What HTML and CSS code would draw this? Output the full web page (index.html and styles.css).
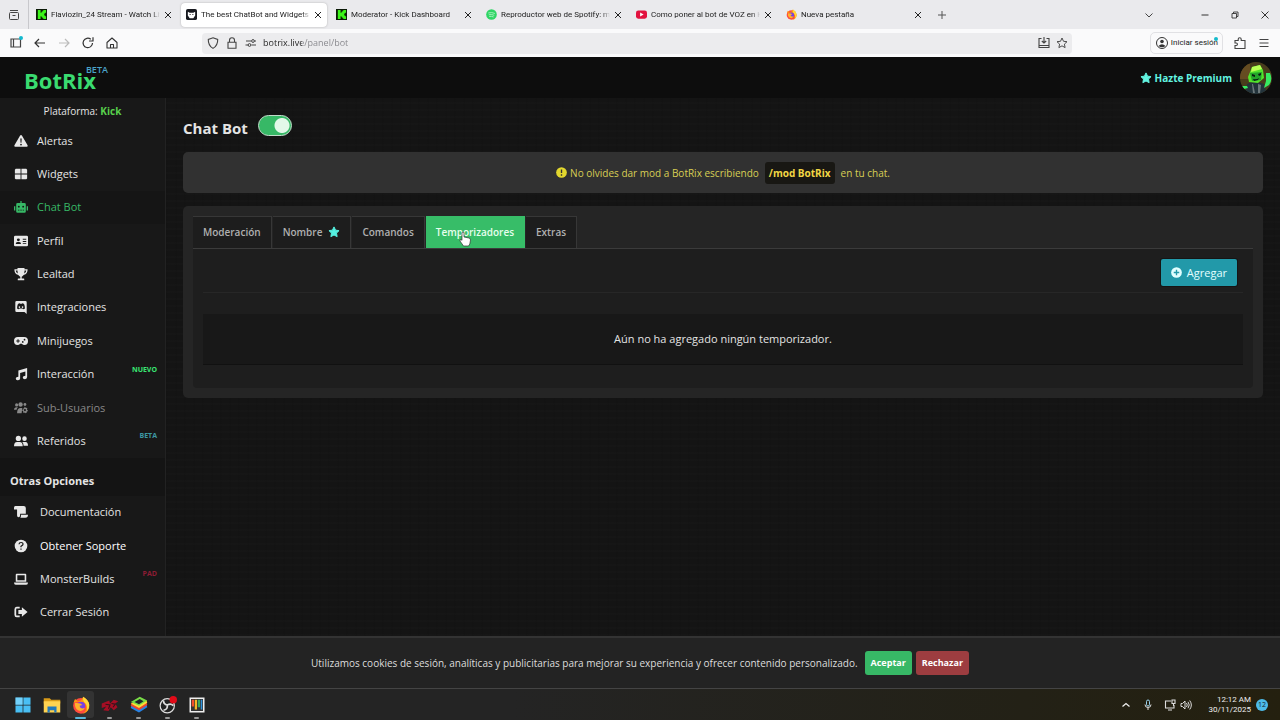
FILE: index.html
```html
<!DOCTYPE html>
<html lang="es">
<head>
<meta charset="utf-8">
<meta name="viewport" content="width=device-width, initial-scale=1">
<title>The best ChatBot and Widgets for Kick</title>
<link rel="stylesheet" href="styles.css">
</head>
<body>
<svg class="sprite" aria-hidden="true">
  <symbol id="kick" viewBox="0 0 12 12"><path fill="#0b1a06" d="M0 0h12v12H0z"/><path fill="#3cf51a" d="M2 1h3v3h1V3h1V2h1V1h3v3h-1v1H9v2h1v1h1v3H8v-1H7V9H6V8H5v3H2z"/></symbol>
  <symbol id="close" viewBox="0 0 8 8"><path d="M1 1l6 6M7 1L1 7" stroke="currentColor" stroke-width="1" fill="none"/></symbol>
  <symbol id="star" viewBox="0 0 24 24"><path fill="currentColor" stroke="currentColor" stroke-width="2" stroke-linejoin="round" d="M12 1.8l3.1 6.500 7 1-5.100 4.900 1.300 7.100L12 18l-6.300 3.300L7 14.200 1.900 9.300l7-1z"/></symbol>
  <symbol id="starline" viewBox="0 0 24 24"><path fill="none" stroke="currentColor" stroke-width="1.900" stroke-linejoin="round" d="M12 2l3 6.600 7 .8-5.200 4.800 1.400 7L12 17.700 5.800 21.200l1.400-7L2 9.400l7-.8z"/></symbol>
</svg>

<header class="browser">
  <div class="tabstrip">
    <button class="tab-manager" aria-label="Ver pestañas"><svg viewBox="0 0 12 12"><path d="M2 1.500h8M2.500 3.500h7q1 0 1 1v5q0 1-1 1h-7q-1 0-1-1v-5q0-1 1-1zM4.500 6.500h3" fill="none" stroke="#444" stroke-width="1"/></svg></button>
    <div class="tab"><svg class="favicon"><use href="#kick"/></svg><span>Flaviozin_24 Stream - Watch Live</span><button aria-label="Cerrar"><svg><use href="#close"/></svg></button></div>
    <div class="tab active"><svg class="favicon" viewBox="0 0 12 12"><rect width="12" height="12" rx="2" fill="#17191f"/><path d="M2 3l2 1h4l2-1v4L8 10H4L2 7z" fill="#fff"/><path d="M4 5.500h1v1H4zM7 5.500h1v1H7z" fill="#111"/></svg><span>The best ChatBot and Widgets for</span><button aria-label="Cerrar"><svg><use href="#close"/></svg></button></div>
    <div class="tab"><svg class="favicon"><use href="#kick"/></svg><span>Moderator - Kick Dashboard</span><button aria-label="Cerrar"><svg><use href="#close"/></svg></button></div>
    <div class="tab"><svg class="favicon" viewBox="0 0 12 12"><circle cx="6" cy="6" r="5.800" fill="#2fd565"/><path d="M2.500 4.300q4-1 7.200.6M3 6.300q3.300-.8 6 .6M3.500 8.200q2.700-.6 4.800.5" fill="none" stroke="#a9f2c0" stroke-width="1"/></svg><span>Reproductor web de Spotify: música</span><button aria-label="Cerrar"><svg><use href="#close"/></svg></button></div>
    <div class="tab"><svg class="favicon" viewBox="0 0 12 12"><rect y="1.500" width="12" height="9" rx="2.500" fill="#e2123f"/><path d="M4.500 3.800v4.400L8.300 6z" fill="#fff"/></svg><span>Como poner al bot de VOZ en Kick</span><button aria-label="Cerrar"><svg><use href="#close"/></svg></button></div>
    <div class="tab"><svg class="favicon" viewBox="0 0 24 24"><use href="#firefox"/></svg><span>Nueva pestaña</span><button aria-label="Cerrar"><svg><use href="#close"/></svg></button></div>
    <button class="new-tab" aria-label="Nueva pestaña"><svg viewBox="0 0 10 10"><path d="M5 1v8M1 5h8" stroke="#555" fill="none"/></svg></button>
    <div class="window-controls">
      <button aria-label="Lista de pestañas"><svg viewBox="0 0 10 10"><path d="M1.500 3.500L5 7l3.500-3.500" fill="none" stroke="#444"/></svg></button>
      <button aria-label="Minimizar"><svg viewBox="0 0 10 10"><path d="M1.500 5h7" stroke="#333"/></svg></button>
      <button aria-label="Restaurar"><svg viewBox="0 0 10 10"><path d="M2 3.500h4.500V8H2zM3.500 3.500V2H8v4.500H6.500" fill="none" stroke="#333" stroke-width=".9"/></svg></button>
      <button aria-label="Cerrar ventana"><svg viewBox="0 0 10 10"><path d="M1.500 1.500l7 7M8.500 1.500l-7 7" stroke="#333"/></svg></button>
    </div>
  </div>
  <div class="toolbar">
    <div class="nav-buttons">
      <button aria-label="Barra lateral"><svg viewBox="0 0 14 14"><path d="M2 3h9.500v8H2zM4.500 3v8" fill="none" stroke="#444" stroke-width="1.200"/><circle cx="12" cy="2" r="2" fill="#13b9cf"/></svg></button>
      <button aria-label="Atrás"><svg viewBox="0 0 14 14"><path d="M12 7H2M6 3L2 7l4 4" fill="none" stroke="#333" stroke-width="1.200"/></svg></button>
      <button aria-label="Adelante" disabled><svg viewBox="0 0 14 14"><path d="M2 7h10M8 3l4 4-4 4" fill="none" stroke="#bbb" stroke-width="1.200"/></svg></button>
      <button aria-label="Recargar"><svg viewBox="0 0 14 14"><path d="M11.500 7A4.700 4.700 0 1 1 9.800 3.300M8 5h4V1.300" fill="none" stroke="#333" stroke-width="1.200"/></svg></button>
      <button aria-label="Inicio"><svg viewBox="0 0 14 14"><path d="M2 6.500L7 2l5 4.500V12H2zM5.500 12V8.500h3V12" fill="none" stroke="#333" stroke-width="1.100" stroke-linejoin="round"/></svg></button>
    </div>
    <div class="urlbar">
      <svg viewBox="0 0 14 14"><path d="M7 1.800l4.700 1.600q.2 6-4.700 9-4.900-3-4.700-9z" fill="none" stroke="#444" stroke-width="1.100"/></svg>
      <svg viewBox="0 0 14 14"><path d="M3 6.200h8v6H3zM4.500 6V4.300a2.500 2.500 0 0 1 5 0V6" fill="none" stroke="#444" stroke-width="1.100"/></svg>
      <svg viewBox="0 0 14 14"><path d="M1.500 9h3M7.500 9H12M2 5h5M10.500 5H12" stroke="#444" fill="none"/><circle cx="5.500" cy="9" r="1.400" fill="none" stroke="#444"/><circle cx="9" cy="5" r="1.400" fill="none" stroke="#444"/></svg>
      <input type="text" value="botrix.live/panel/bot" aria-label="Dirección">
      <button aria-label="Instalar"><svg viewBox="0 0 14 14"><path d="M4.500 2.500H2v9h10v-9H9.500M2 9.500h10M7 1v6M4.800 5L7 7l2.200-2" fill="none" stroke="#444" stroke-width="1.100"/></svg></button>
      <button aria-label="Marcador"><svg><use href="#starline"/></svg></button>
    </div>
    <div class="tools">
      <button class="sign-in"><svg viewBox="0 0 14 14"><circle cx="7" cy="7" r="5.500" fill="none" stroke="#333"/><circle cx="7" cy="5.500" r="1.800" fill="#333"/><path d="M3.500 10q3.500-3.500 7 0-3.500 2.500-7 0z" fill="#333"/></svg>Iniciar sesión<i></i></button>
      <button aria-label="Extensiones"><svg viewBox="0 0 14 14"><path d="M2 12.500V9.500h1.200a1.200 1.200 0 0 0 0-2.500H2V4.500h3.200V3.200a1.500 1.500 0 0 1 3 0v1.300H12v8z" fill="none" stroke="#444" stroke-width="1.100"/></svg></button>
      <button aria-label="Menú"><svg viewBox="0 0 14 14"><path d="M2.500 3.500h9M2.500 7h9M2.500 10.500h9" stroke="#444"/></svg></button>
    </div>
  </div>
</header>

<div class="site">
  <header class="site-header">
    <a class="logo" href="#">BotRix<sup>BETA</sup></a>
    <div class="account">
      <a class="premium" href="#"><svg><use href="#star"/></svg>Hazte Premium</a>
      <svg class="avatar" viewBox="0 0 32 32" role="img" aria-label="Perfil"><defs><clipPath id="round"><circle cx="16" cy="16" r="16"/></clipPath></defs><g clip-path="url(#round)"><path fill="#493c1c" d="M0 0h32v32H0z"/><path fill="#654c21" d="M0 2h10v15H0z"/><path fill="#23333b" d="M5 32l2-10 7-3 10 3 3 10z"/><path fill="#52e42b" d="M12 5l8-2 3 5 1 8-6 5-9-1-1-5z"/><path fill="#baff54" d="M12 5l8-2 2 4-11 3z"/><path fill="#25a52b" d="M10 11l12-1-1 8-9 1z"/><path fill="#091b10" d="M12 12l3 1v2l-3-1zM18 12l3-1v2l-2 1zM13 17q4 1 6-1l-1 2-4 1z"/><path fill="#37eb61" d="M26 11h4q3 7-1 12l-5 3 2-7zM2 24h5l1 2-4 1z"/><path fill="#6b777b" d="M12 22l1 9h2l-2-9zM18 22v9h2l1-8z"/></g></svg>
    </div>
  </header>

  <div class="body">
    <aside class="sidebar">
      <p class="platform">Plataforma: <b>Kick</b></p>
      <nav class="menu main-menu" aria-label="Panel">
        <a href="#"><svg viewBox="0 0 16 16"><path fill="currentColor" fill-rule="evenodd" d="M8 1q.6 0 1 .6l6.500 11.200q.6 1.700-1 1.700h-13q-1.600 0-1-1.700L7 1.600Q7.400 1 8 1zM7.200 5l.3 5h1l.3-5zM8 11a1 1 0 1 0 0 2 1 1 0 0 0 0-2z"/></svg>Alertas</a>
        <a href="#"><svg viewBox="0 0 16 16"><path fill="currentColor" d="M2 2h5.500v5.500H1V3zM8.500 2H14l1 1v4.500H8.500zM1 8.500h6.500V14H2l-1-1zM8.500 8.500H15V13l-1 1H8.500z"/></svg>Widgets</a>
        <a href="#" class="current"><svg viewBox="0 0 16 16"><path fill="currentColor" fill-rule="evenodd" d="M7.300 1h1.400v2.500H12q1.500 0 1.500 1.500v8q0 1.500-1.500 1.500H4Q2.500 14.500 2.500 13V5q0-1.500 1.500-1.500h3.300zM5.500 6.500a1.100 1.100 0 1 0 0 2.200 1.100 1.100 0 0 0 0-2.200zm5 0a1.100 1.100 0 1 0 0 2.200 1.100 1.100 0 0 0 0-2.200zM4.500 11v1h1.700v-1zm2.700 0v1h1.700v-1zm2.700 0v1h1.600v-1zM0 7h1.500v5H0zM14.500 7H16v5h-1.500z"/></svg>Chat Bot</a>
        <a href="#"><svg viewBox="0 0 16 16"><path fill="currentColor" fill-rule="evenodd" d="M1.500 2h13Q16 2 16 3.500v9q0 1.500-1.500 1.500h-13Q0 14 0 12.500v-9Q0 2 1.500 2zM5 5a1.700 1.700 0 1 0 0 3.400A1.700 1.700 0 0 0 5 5zm-3 6.500h6q0-2.300-2-2.300H4q-2 0-2 2.300zM10 5.500v1h4v-1zm0 2.500v1h4V8zm0 2.500v1h4v-1z"/></svg>Perfil</a>
        <a href="#"><svg viewBox="0 0 16 16"><path fill="currentColor" fill-rule="evenodd" d="M4 1h8v1.500h3.500q.4 5.300-4.500 6.600-.8 1.500-2.200 1.900V13H11q.7 0 .7.700V15H4.300v-1.300q0-.7.7-.7h2.200v-2Q5.800 10.600 5 9.100 0 7.800.5 2.500H4zM2 4q.1 2.400 2.400 3.400Q4 6 4 4zm12 0h-2q0 2-.4 3.400Q13.900 6.400 14 4z"/></svg>Lealtad</a>
        <a href="#"><svg viewBox="0 0 16 16"><path fill="currentColor" fill-rule="evenodd" d="M3 1h10q1.500 0 1.500 1.500V16L12 13.700H3q-1.500 0-1.500-1.500V2.500Q1.500 1 3 1zm1.500 3.500q-1.300 3-1 5.200.8.900 2.200 1l.6-.9h3.400l.6.900q1.400-.1 2.200-1 .3-2.200-1-5.200-1-.8-2.200-.8l-.3.600H7l-.3-.6q-1.200 0-2.200.8zM6.200 7a.9 1 0 1 1 0 2 .9 1 0 0 1 0-2zm3.600 0a.9 1 0 1 1 0 2 .9 1 0 0 1 0-2z"/></svg>Integraciones</a>
        <a href="#"><svg viewBox="0 0 16 16"><path fill="currentColor" fill-rule="evenodd" d="M4.500 3.500h7Q16 3.500 16 8t-4 4.500q-2 0-3-1.500H7q-1 1.500-3 1.500Q0 12.500 0 8t4.500-4.500zM4 6v1.400H2.600v1.200H4V10h1.200V8.600h1.400V7.400H5.200V6zm6 2a1 1 0 1 0 0 2 1 1 0 0 0 0-2zm2-2.500a1 1 0 1 0 0 2 1 1 0 0 0 0-2z"/></svg>Minijuegos</a>
        <a href="#"><svg viewBox="0 0 16 16"><path fill="currentColor" d="M15 1v10.500q0 2-2.500 2.500-2.500 0-2.500-2t3-2V5L7 6.800V13q0 2-2.500 2Q2 15.200 2 13.200t3-2V4z"/></svg>Interacción<small class="new">NUEVO</small></a>
        <a href="#" class="muted"><svg viewBox="0 0 16 16"><circle cx="3" cy="4.500" r="1.800" fill="currentColor"/><circle cx="7.500" cy="4" r="2.500" fill="currentColor"/><circle cx="12.500" cy="4" r="1.600" fill="currentColor"/><path fill="currentColor" fill-rule="evenodd" d="M0 10q0-3 3-3h1.500Q3 8.500 3 10zm3.500 4q0-6 4-6h2l-.8 6zM12 6.700l1 .1.300 1.200 1.200-.3.800 1-.6 1.100 1.100.7-.2 1.300-1.200.4.100 1.200-1.200.5-.9-.9-1 .6-1-.7.200-1.200-1.100-.5V10l1.200-.3-.1-1.200 1.200-.5zm.5 2.500a1.200 1.200 0 1 0 0 2.400 1.200 1.200 0 0 0 0-2.400z"/></svg>Sub-Usuarios</a>
        <a href="#"><svg viewBox="0 0 16 16"><circle cx="5" cy="5" r="3" fill="currentColor"/><circle cx="12" cy="5.300" r="2.600" fill="currentColor"/><path fill="currentColor" d="M0 14q0-5 3.500-5h3q3.500 0 3.500 5zM9.500 9h3.800Q16 9 16 13.500h-5Q11 10.500 9.500 9z"/></svg>Referidos<small class="beta">BETA</small></a>
      </nav>
      <h2>Otras Opciones</h2>
      <nav class="menu other-menu" aria-label="Otras Opciones">
        <a href="#"><svg viewBox="0 0 16 16"><path fill="currentColor" d="M1.500 1H11q2.500 0 2.500 2.500V10H7v1.800Q7 14 5.200 14 3.500 14 3.500 12V5H0V3Q0 1 1.500 1zM8 11h8q0 3.500-3 3.500H7.200Q8 13.500 8 12z"/></svg>Documentación</a>
        <a href="#" class="strong"><svg viewBox="0 0 16 16"><circle cx="8" cy="8" r="7.200" fill="currentColor"/><path d="M5.700 6q.2-2 2.400-2t2.300 1.800Q10.400 7 8 8.300v1.100M8 10.800v1.400" fill="none" stroke="#181818" stroke-width="1.400"/></svg>Obtener Soporte</a>
        <a href="#"><svg viewBox="0 0 16 16"><path fill="currentColor" fill-rule="evenodd" d="M3 2h10q1 0 1 1v8H2V3q0-1 1-1zm.8 1.800v5.700h8.400V3.800zM0 12h16q0 2.500-2 2.500H2Q0 14.500 0 12z"/></svg>MonsterBuilds<small class="ad">PAD</small></a>
        <a href="#"><svg viewBox="0 0 16 16"><path d="M6.500 3H3Q1.500 3 1.500 5v6q0 2 1.500 2h3.500" fill="none" stroke="currentColor" stroke-width="2"/><path fill="currentColor" d="M5 5.700h4V2.500L15.500 8 9 13.500v-3.200H5z"/></svg>Cerrar Sesión</a>
      </nav>
    </aside>

    <main>
      <div class="title">
        <h1><label for="bot-enabled">Chat Bot</label></h1>
        <input id="bot-enabled" class="switch" type="checkbox" role="switch" checked>
      </div>
      <p class="notice"><svg viewBox="0 0 16 16"><circle cx="8" cy="8" r="7.800" fill="currentColor"/><path d="M8 3.500v5.300M8 10.500v2.200" stroke="#333" stroke-width="2"/></svg>No olvides dar mod a BotRix escribiendo <code>/mod BotRix</code> en tu chat.</p>
      <section class="card">
        <div class="tabs" role="tablist">
          <button role="tab">Moderación</button>
          <button role="tab">Nombre<svg><use href="#star"/></svg></button>
          <button role="tab">Comandos</button>
          <button role="tab" aria-selected="true">Temporizadores<svg class="pointer" viewBox="0 0 12 16"><path d="M3 1.500q1-1 2 0V6l5 1q1.500.3 1.500 2l-.7 4-1.300 2H4.500L1 10q-.5-1.500 1-1.500l1 .8z" fill="#fff" stroke="#333" stroke-width=".7"/></svg></button>
          <button role="tab">Extras</button>
        </div>
        <div class="panel" role="tabpanel">
          <div class="actions"><button class="add"><svg viewBox="0 0 16 16"><circle cx="8" cy="8" r="7.800" fill="currentColor"/><path d="M8 4v8M4 8h8" stroke="#2299a9" stroke-width="2"/></svg>Agregar</button></div>
          <p class="empty">Aún no ha agregado ningún temporizador.</p>
        </div>
      </section>
    </main>
  </div>

  <div class="cookies">
    <p>Utilizamos cookies de sesión, analíticas y publicitarias para mejorar su experiencia y ofrecer contenido personalizado.</p>
    <button class="accept">Aceptar</button>
    <button class="reject">Rechazar</button>
  </div>
</div>

<footer class="taskbar">
  <div class="apps">
    <button aria-label="Inicio"><svg viewBox="0 0 24 24"><path fill="#49bff4" d="M2 2h9.500v9.500H2zM12.500 2H22v9.500h-9.500zM2 12.500h9.500V22H2zM12.500 12.500H22V22h-9.500z"/><path fill="#95e0ff" opacity=".55" d="M2 2h9.500v9.500H2z"/></svg></button>
    <button aria-label="Explorador"><svg viewBox="0 0 24 24"><path fill="#d99b18" d="M1 3h8l2 2h12v5H1z"/><path fill="#ffd351" d="M1 7h22v15H1z"/><path fill="#2379bb" d="M6 14h12v8h-3v-3H9v3H6z"/></svg></button>
    <button class="open focused" aria-label="Firefox"><svg viewBox="0 0 24 24"><symbol id="firefox" viewBox="0 0 24 24"><circle cx="12" cy="13" r="10.500" fill="#ff4b3e"/><path fill="#ff980e" d="M2 9l2-5 4 3 4-1 3-5q9 6 8 14-2 8-10 9 6-2 6-9-1-7-7-7-6-1-10 1z"/><path fill="#ffd83b" d="M15 1q7 4 8 11 0 5-3 8 1-8-3-11-3-3-2-8z"/><circle cx="12" cy="13" r="5.500" fill="#7542e5"/><path fill="#ffb22b" d="M4 9l7 1 3 2-4 1q1 5 7 3-3 6-9 3-5-3-4-10z"/></symbol><use href="#firefox"/></svg></button>
    <button class="open" aria-label="Aplicación"><svg viewBox="0 0 24 24"><path fill="#a50e24" d="M1 10l10-4 1 4 5-5 6 2-4 3 3 5-5 4-4-4-3 5-7-1 4-5-6 2z"/><path stroke="#33121a" stroke-width="1.500" d="M6 11l6 1-2 5M14 10l5 1-3 4" fill="none"/></svg></button>
    <button class="open" aria-label="BlueStacks"><svg viewBox="0 0 24 24"><path fill="#2582e4" d="M1 16l11 6 11-7-1-4L2 12z"/><path fill="#ea452f" d="M1 13l11 6 11-7-1-4L2 9z"/><path fill="#ffdc35" d="M1 10l11 6 11-7-1-3z"/><path fill="#79dd47" d="M1 8L13 1l10 5-11 7z"/><path fill="#20252a" d="M6 8l7-4 5 3-6 4z"/></svg></button>
    <button class="open" aria-label="OBS Studio"><svg viewBox="0 0 24 24"><circle cx="11" cy="13" r="9.500" fill="#222" stroke="#ddd" stroke-width="1.600"/><path d="M11 12q-5-1-5-6M11 12q5-3 8 1M11 12q1 6-5 7" fill="none" stroke="#ddd" stroke-width="2.300"/><circle cx="19" cy="5" r="5" fill="#e20b18"/></svg></button>
    <button class="open" aria-label="PowerToys"><svg viewBox="0 0 24 24"><path fill="#eee" d="M2 2h20v20H2z"/><path fill="#333" d="M4 4h16v16H4z"/><path fill="#f24e2d" d="M5 5h3v9H5z"/><path fill="#f7b526" d="M9 5h3v13H9z"/><path fill="#36a85c" d="M13 5h3v10h-3z"/><path fill="#2d94dc" d="M17 5h2v13h-2z"/></svg></button>
  </div>
  <div class="tray">
    <button aria-label="Mostrar iconos ocultos"><svg viewBox="0 0 12 12"><path d="M2.500 7.500L6 4.500l3.500 3" fill="none" stroke="#eee" stroke-width="1.300"/></svg></button>
    <button aria-label="Micrófono"><svg viewBox="0 0 12 12"><rect x="4.500" y="1" width="3" height="6" rx="1.500" fill="none" stroke="#9ad2ec"/><path d="M3 5.500q0 3 3 3t3-3M6 8.500V11" fill="none" stroke="#ddd"/></svg></button>
    <button class="system" aria-label="Red y volumen"><svg viewBox="0 0 12 12"><path d="M7 2H1.500v7H10V6M4 11h4M8 1h3v3.500H8zM9.500 4.500V7" fill="none" stroke="#ddd" stroke-width="1.100"/></svg><svg viewBox="0 0 12 12"><path d="M1 4.500h1.500L5 2v8L2.500 7.500H1zM6.500 4q1.500 2 0 4M8 2.800q2.500 3.200 0 6.400M9.700 1.500q3.300 4.500 0 9" fill="none" stroke="#ddd"/></svg></button>
    <p class="clock"><time>12:12 AM<br>30/11/2025</time></p>
    <span class="count">12</span>
  </div>
</footer>
</body>
</html>
```
FILE: styles.css
```css
* { box-sizing: border-box; }
body {
  margin: 0;
  min-height: 100vh;
  display: flex;
  flex-direction: column;
  background: #131313;
  color: #e4e4e4;
  font: 11px/16px "Open Sans", "Noto Sans", sans-serif;
}
h1, h2, p { margin: 0; }
a { color: inherit; text-decoration: none; }
button { margin: 0; padding: 0; border: 0; background: none; color: inherit; font: inherit; cursor: pointer; }
svg { display: block; flex: none; }
.sprite { display: none; }

/* Browser window */
.browser { color: #222; font: 8px/12px Roboto, "Noto Sans", sans-serif; }
.tabstrip { display: flex; align-items: center; height: 29px; background: #eaeaed; }
.tab-manager { width: 29px; height: 29px; padding-left: 8px; border-right: 1px solid #c8c8cc; }
.tab-manager svg { width: 12px; height: 12px; }
.tab {
  display: flex;
  align-items: center;
  gap: 4px;
  flex: 0 1 146px;
  min-width: 0;
  height: 24px;
  margin: 0 2px;
  padding: 0 5px;
  border-radius: 4px;
}
.tab.active { background: #fff; box-shadow: 0 0 2px #aaa; }
.tab span {
  flex: 1;
  overflow: hidden;
  white-space: nowrap;
  mask-image: linear-gradient(to left, transparent, #000 8px);
}
.favicon { width: 11px; height: 11px; }
.tab button svg { width: 8px; height: 8px; }
.new-tab { margin-left: 8px; }
.new-tab svg, .window-controls svg { width: 10px; height: 10px; }
.window-controls { display: flex; gap: 20px; margin-left: auto; padding-right: 10px; }
.window-controls button:first-child { margin-right: 26px; }
.toolbar { display: flex; align-items: center; height: 28px; padding: 0 9px; background: #fafafb; }
.nav-buttons { display: flex; gap: 10px; width: 193px; }
.nav-buttons svg, .urlbar svg, .tools svg { width: 14px; height: 14px; }
.urlbar {
  display: flex;
  align-items: center;
  gap: 5px;
  flex: 1;
  height: 21px;
  padding: 0 4px;
  border-radius: 4px;
  background: #ececee;
}
.urlbar input {
  flex: 1;
  min-width: 0;
  padding: 0;
  border: 0;
  outline: 0;
  color: transparent;
  background: linear-gradient(90deg, #222 39px, #85858a 39px) text;
  font: 9px/14px "Open Sans", "Noto Sans", sans-serif;
}
.urlbar svg use { color: #444; }
.urlbar button:last-child svg { width: 12px; height: 12px; }
.tools { display: flex; align-items: center; gap: 10px; margin-left: 78px; }
.sign-in {
  position: relative;
  display: flex;
  align-items: center;
  gap: 2px;
  height: 22px;
  padding: 0 4px;
  border: 1px solid #e1e1e4;
  border-radius: 5px;
}
.sign-in i { position: absolute; top: 4px; right: 4px; width: 4px; height: 4px; border-radius: 50%; background: #15bbcc; }

/* Site shell */
.site { flex: 1; display: flex; flex-direction: column; }
.site-header {
  display: flex;
  align-items: center;
  justify-content: space-between;
  height: 41px;
  padding: 0 8px 0 24px;
  background: #0d0d0d;
}
.logo { display: flex; padding-top: 4px; color: #3adb70; font-size: 22px; line-height: 28px; font-weight: 700; }
.logo sup { margin: -2px 0 0 -10px; color: #4ba3ca; font-size: 9px; line-height: 12px; font-weight: 600; }
.account { display: flex; align-items: center; gap: 8px; }
.premium { display: flex; align-items: center; gap: 3px; color: #62f3e0; font-size: 10px; font-weight: 700; }
.premium svg { width: 12px; height: 12px; }
.avatar { width: 32px; height: 32px; }
.body { flex: 1; display: flex; }

/* Sidebar */
.sidebar {
  display: flex;
  flex-direction: column;
  flex: none;
  width: 166px;
  padding-bottom: 7px;
  border-right: 1px solid #222;
  background: #181818;
}
.platform { height: 26px; font-size: 10px; line-height: 26px; text-align: center; }
.platform b { color: #58cf4c; }
.menu { display: flex; flex-direction: column; }
.main-menu { flex: 10 0 0; }
.other-menu { flex: 4 0 0; }
.menu a { position: relative; flex: 1; min-height: 28px; display: flex; align-items: center; gap: 9px; padding-left: 14px; }
.other-menu a { gap: 12px; }
.menu svg { width: 14px; height: 14px; color: #e8e8e8; }
.menu .current, .menu .current svg { color: #37b866; }
.menu .current { background: #151515; }
.menu .muted, .menu .muted svg { color: #888; }
.menu .strong { color: #fff; font-weight: 500; }
.menu small { position: absolute; top: 7px; right: 8px; font-size: 7px; line-height: 10px; font-weight: 700; }
.new { color: #38e673; }
.beta { color: #3d97a3; }
.ad { color: #8c1c34; }
.sidebar h2 { height: 38px; padding: 4px 10px 0; background: #141414; font-size: 11px; line-height: 38px; font-weight: 700; }

/* Content */
main {
  flex: 1;
  min-width: 0;
  padding: 16px 17px;
  background:
    repeating-linear-gradient(0deg, #ffffff02 0 2px, transparent 2px 7px),
    repeating-linear-gradient(90deg, #0000000a 0 2px, transparent 2px 9px),
    #141414;
}
.title { display: flex; align-items: flex-start; gap: 10px; height: 38px; }
h1 { padding-top: 4px; font-size: 15px; line-height: 20px; }
.switch {
  appearance: none;
  width: 34px;
  height: 21px;
  margin: 1px 0 0;
  border: 1px solid #c1dcca;
  border-radius: 11px;
  background: radial-gradient(circle at 23px 50%, #e3f8e9 7px, transparent 8px), #37b866;
}
.notice {
  display: flex;
  align-items: center;
  justify-content: center;
  gap: 3px;
  min-height: 41px;
  border-radius: 5px;
  background: #313131;
  color: #d8cf54;
  font-size: 10px;
}
.notice svg { width: 11px; height: 11px; color: #e2d72e; }
.notice code { margin: 0 3px; padding: 2px 4px; border-radius: 3px; background: #181713; color: #f1d645; font: 700 10px/18px "Open Sans", "Noto Sans", sans-serif; }
.card { margin-top: 13px; padding: 10px; border-radius: 5px; background: #252525; }
.tabs { display: flex; gap: 1px; border-bottom: 1px solid #3b3b3b; }
.tabs button {
  position: relative;
  display: flex;
  align-items: center;
  gap: 6px;
  height: 32px;
  padding: 0 10px 1px;
  border: 1px solid #373737;
  border-width: 1px 1px 0 0;
  background: #1d1d1d;
  color: #b0b0b0;
  font-size: 10px;
  font-weight: 600;
}
.tabs svg { width: 12px; height: 12px; color: #55f0e0; }
.tabs button[aria-selected="true"] { border-color: #37bd68; background: #37bd68; color: #e6ffee; }
.tabs .pointer { position: absolute; left: 33px; top: 14px; width: 12px; height: 16px; }
.panel { padding: 10px 10px 23px; border-radius: 0 0 4px 4px; background: #1e1e1e; }
.actions { display: flex; justify-content: flex-end; padding: 0 6px 6px; border-bottom: 1px solid #272727; }
.add { display: flex; align-items: center; gap: 5px; height: 27px; padding: 0 10px; border-radius: 2px; background: #2299a9; color: #e2ffff; box-shadow: 0 0 0 1px #151515; }
.add svg { width: 11px; height: 11px; }
.empty { margin-top: 21px; padding: 17px; border-bottom: 1px solid #111; background: #181818; text-align: center; }

/* Cookie notice */
.cookies {
  display: flex;
  align-items: center;
  justify-content: center;
  gap: 4px;
  min-height: 53px;
  border-top: 2px solid #333;
  border-bottom: 1px solid #444;
  background: #232323;
  color: #ddd;
  font-size: 10px;
}
.cookies p { padding-right: 3px; }
.cookies button { height: 24px; padding: 0 6px; border-radius: 3px; color: #fff; font-size: 9px; font-weight: 700; }
.accept { background: #37b866; }
.reject { background: #9d3d40; }

/* Taskbar */
.taskbar {
  display: flex;
  justify-content: space-between;
  height: 31px;
  padding: 0 12px 0 9px;
  background: linear-gradient(90deg, #242424 40%, #232116 80%, #24200f);
}
.apps { display: flex; align-items: center; gap: 2px; }
.apps button { position: relative; display: grid; place-items: center; width: 27px; height: 27px; border-radius: 3px; }
.apps .focused { background: #333; }
.apps svg { width: 18px; height: 18px; }
.open::after { content: ""; position: absolute; bottom: -1px; left: 11px; width: 5px; height: 2px; border-radius: 1px; background: #999; }
.focused::after { left: 8px; width: 11px; background: #58b8dc; }
.tray { display: flex; align-items: center; gap: 10px; }
.tray svg { width: 12px; height: 12px; }
.system { display: flex; gap: 4px; }
.clock { margin-left: 6px; text-align: right; font: 8px/10px Roboto, "Noto Sans", sans-serif; color: #eee; }
.count { display: grid; place-items: center; width: 12px; height: 12px; margin-left: -5px; border-radius: 50%; background: #4dbbe9; color: #123; font-size: 7px; line-height: 12px; }
```
